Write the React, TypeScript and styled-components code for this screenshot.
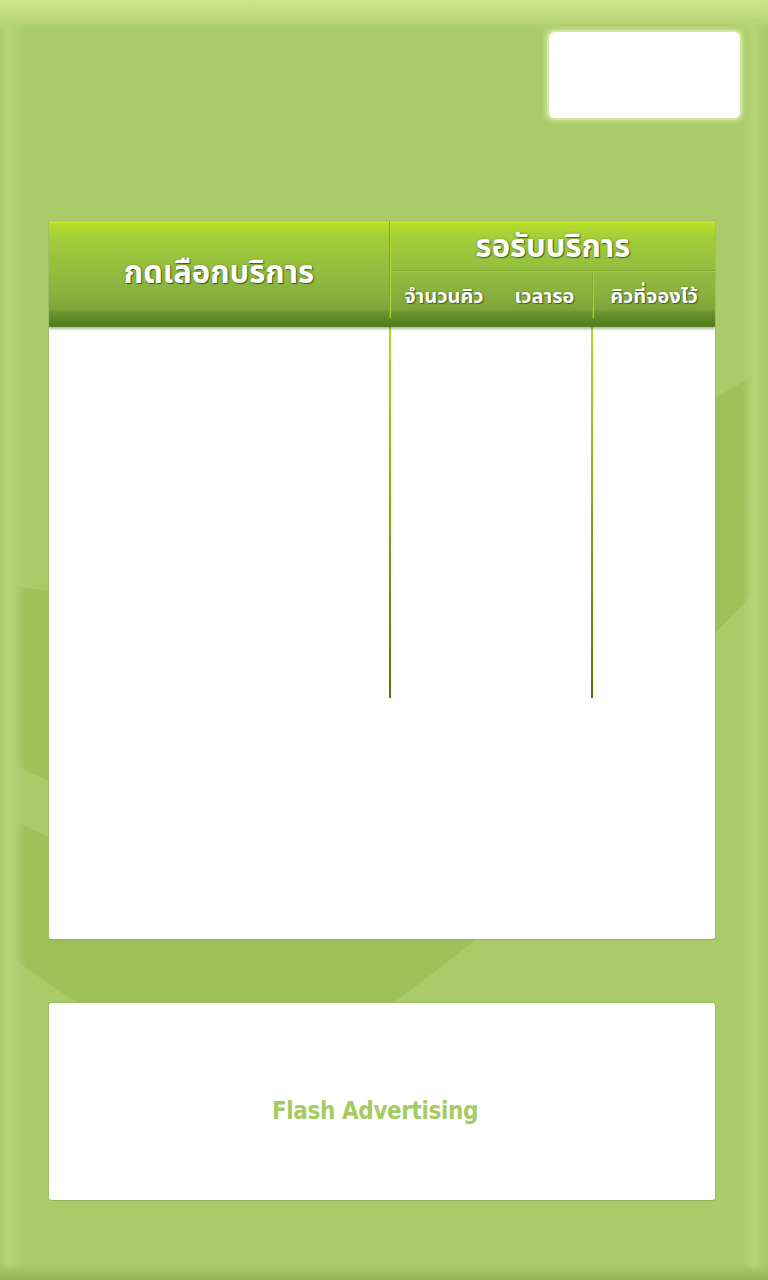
import React from "react";
import styled, { createGlobalStyle } from "styled-components";

const GlobalStyle = createGlobalStyle`
  html, body { margin: 0; padding: 0; }
  body { font-family: Tahoma, "Noto Sans Thai", "Noto Sans", "DejaVu Sans", sans-serif; }
`;

const THAI = `Tahoma, "Noto Sans Thai", "Noto Sans", "DejaVu Sans", sans-serif`;

const Page = styled.div`
  position: relative;
  width: 768px;
  height: 1280px;
  overflow: hidden;
  background: #a9cb68;
`;

const Backdrop = styled.svg`
  position: absolute;
  left: 0;
  top: 0;
  width: 768px;
  height: 1280px;
  z-index: 0;
`;

const Content = styled.div`
  position: relative;
  z-index: 1;
  display: flex;
  flex-direction: column;
  padding: 0 52px 0 48px;
`;

const TopBar = styled.div`
  display: flex;
  justify-content: flex-end;
  padding-top: 26px;
  margin-right: -30px;
`;

const LogoFrame = styled.div`
  width: 204px;
  height: 97px;
  box-sizing: border-box;
  padding: 6px 6px 5px 7px;
  background: #b6d577;
  box-shadow: inset 0 0 5px 1px #aacb69;
`;

const LogoBox = styled.div`
  width: 100%;
  height: 100%;
  background: #ffffff;
  border-radius: 6px;
  box-shadow: 0 0 0 2px #d3e7a0, 0 0 4px 3px #c7e08e;
`;

const Panel = styled.div<{ $top: number; $height: number }>`
  margin-top: ${(p) => p.$top}px;
  height: ${(p) => p.$height}px;
  box-sizing: border-box;
  background: #ffffff;
  border-radius: 4px;
  border: 1px solid #9fbd66;
  border-bottom-color: #93b15a;
  overflow: hidden;
  display: flex;
  flex-direction: column;
`;

const Header = styled.div`
  height: 106px;
  box-sizing: border-box;
  display: grid;
  grid-template-columns: 341px 1fr;
  padding-bottom: 9px;
  background: linear-gradient(
    to bottom,
    #c8ea1c 0px,
    #b2da2e 5px,
    #a1cd3a 18px,
    #94c03e 45px,
    #88b03e 75px,
    #7fa53a 88px,
    #6d9630 91px,
    #5f8a26 97px,
    #527d1c 106px
  );
  box-shadow: 0 2px 3px rgba(70, 100, 30, 0.45);
  border-radius: 3px 3px 0 0;
  position: relative;
  z-index: 1;
`;

const TitleCell = styled.div`
  display: flex;
  align-items: center;
  justify-content: center;
  border-right: 1px solid #78a524;
  box-shadow: 1px 0 0 #b3dc36;
  padding-top: 8px;
`;

const HeadText = styled.span<{ $size: number }>`
  font-family: ${THAI};
  font-weight: 700;
  font-size: ${(p) => p.$size}px;
  line-height: 1;
  color: #ffffff;
  white-space: nowrap;
  text-shadow: 1px 1px 1px #3f5f14, 0 0 2px rgba(60, 90, 20, 0.6);
`;

const WaitCell = styled.div`
  display: flex;
  flex-direction: column;
  margin-left: 1px;
`;

const WaitTop = styled.div`
  height: 50px;
  display: flex;
  align-items: center;
  justify-content: center;
  border-bottom: 1px solid #7ea82a;
  box-shadow: 0 1px 0 #a7d03c;
  padding-top: 4px;
  box-sizing: border-box;
`;

const SubRow = styled.div`
  flex: 1;
  display: grid;
  grid-template-columns: 106px 95px 1fr;
  margin-top: 1px;
`;

const SubCell = styled.div<{ $divider?: boolean }>`
  display: flex;
  align-items: center;
  justify-content: center;
  padding-top: 3px;
  ${(p) =>
    p.$divider
      ? `border-left: 1px solid #7ea82a; box-shadow: inset 1px 0 0 #a9d23a;`
      : ""}
`;

const Body = styled.div`
  display: grid;
  grid-template-columns: 340px 202px 1fr;
  height: 371px;
`;

const BodyCell = styled.div<{ $line?: boolean }>`
  ${(p) =>
    p.$line
      ? `background: linear-gradient(to bottom, #b0dc1e 0%, #86b80c 40%, #4a7c00 100%) left top / 2px 100% no-repeat;`
      : ""}
`;

const AdPanel = styled(Panel)`
  align-items: center;
  justify-content: center;
`;

const AdText = styled.span`
  font-family: Tahoma, "DejaVu Sans Condensed", "DejaVu Sans", sans-serif;
  font-weight: 700;
  font-size: 24px;
  color: #a6cb62;
  letter-spacing: -0.4px;
  margin: 18px 14px 0 0;
`;

const EdgeGlow = styled.div`
  position: absolute;
  inset: 0;
  z-index: 0;
  pointer-events: none;
  background:
    linear-gradient(to bottom, #d0e38b 0px, #cadf85 10px, #b8d575 20px, rgba(169, 203, 104, 0) 30px),
    linear-gradient(to top, #92b256 0px, #a0c060 8px, rgba(169, 203, 104, 0) 16px),
    linear-gradient(to right, #a8ca68 0px, #b8d67a 8px, #b2d174 14px, rgba(169, 203, 104, 0) 26px),
    linear-gradient(to left, #a6c866 0px, #b0cf72 8px, #b8d678 14px, rgba(169, 203, 104, 0) 26px);
`;

export default function App() {
  return (
    <Page>
      <GlobalStyle />
      <Backdrop viewBox="0 0 768 1280" xmlns="http://www.w3.org/2000/svg">
        <path
          d="M768,368 L716,397 L600,520 L716,632 L768,579 Z"
          fill="#9bc158"
        />
        <path
          d="M0,584 L48,591 L520,820 L475,940 Q438,970 397,1000 L220,1090 L73,1000 Q36,976 0,948 Z"
          fill="#9bc158"
        />
        <path d="M0,758 L48,781 L48,837 L0,814 Z" fill="#a9cb68" />
      </Backdrop>
      <EdgeGlow />
      <Content>
        <TopBar>
          <LogoFrame>
            <LogoBox />
          </LogoFrame>
        </TopBar>
        <Panel $top={97} $height={720}>
          <Header>
            <TitleCell>
              <HeadText $size={31}>กดเลือกบริการ</HeadText>
            </TitleCell>
            <WaitCell>
              <WaitTop>
                <HeadText $size={31}>รอรับบริการ</HeadText>
              </WaitTop>
              <SubRow>
                <SubCell>
                  <HeadText $size={20}>จำนวนคิว</HeadText>
                </SubCell>
                <SubCell>
                  <HeadText $size={20}>เวลารอ</HeadText>
                </SubCell>
                <SubCell $divider>
                  <HeadText $size={20}>คิวที่จองไว้</HeadText>
                </SubCell>
              </SubRow>
            </WaitCell>
          </Header>
          <Body>
            <BodyCell />
            <BodyCell $line />
            <BodyCell $line />
          </Body>
        </Panel>
        <AdPanel $top={62} $height={199}>
          <AdText>Flash Advertising</AdText>
        </AdPanel>
      </Content>
    </Page>
  );
}
